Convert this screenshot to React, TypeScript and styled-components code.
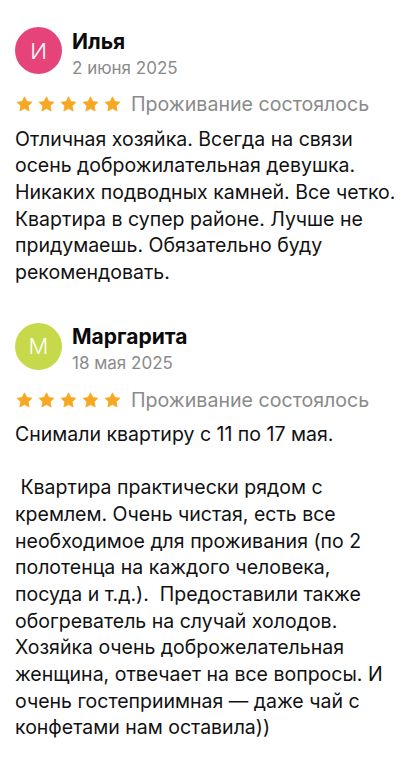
import React from "react";
import styled, { createGlobalStyle } from "styled-components";

const GlobalStyle = createGlobalStyle`
    body {
        margin: 0;
        background: #ffffff;
        font-family: Inter, "Noto Sans", sans-serif;
        color: #111111;
    }
`;

const Page = styled.div`
    display: flex;
    flex-direction: column;
    gap: 37px;
    padding: 27px 15px 0 15px;
`;

const Review = styled.div`
    display: flex;
    flex-direction: column;
`;

const Header = styled.div`
    display: flex;
    align-items: flex-start;
    gap: 10px;
`;

const Avatar = styled.div<{ $bg: string }>`
    width: 47px;
    height: 47px;
    border-radius: 50%;
    background: ${(p) => p.$bg};
    color: #ffffff;
    display: flex;
    align-items: center;
    justify-content: center;
    font-size: 22px;
    font-weight: 300;
    flex-shrink: 0;
`;

const Who = styled.div`
    display: flex;
    flex-direction: column;
    gap: 2px;
    margin-top: 1.5px;
`;

const Name = styled.div`
    font-size: 21px;
    font-weight: 700;
    line-height: 26px;
    color: #0a0a0a;
`;

const DateText = styled.div`
    font-size: 17px;
    color: #8a8a8a;
    line-height: 22px;
`;

const RatingRow = styled.div`
    display: flex;
    align-items: center;
    gap: 10px;
    height: 24px;
    margin-top: 13.5px;
`;

const Stars = styled.div`
    display: flex;
    gap: 5px;
    padding-left: 1px;
`;

const Status = styled.span`
    font-size: 19.6px;
    line-height: 24px;
    color: #8a8a8a;
`;

const Body = styled.p`
    margin: 9.5px 0 0 0;
    font-size: 19.5px;
    line-height: 26.67px;
    white-space: pre;
    color: #111111;
`;

const Star = () => (
    <svg width="17" height="16" viewBox="-1 -1 26 24">
        <path
            d="M12 0L15.53 7.15 23.41 8.29 17.71 13.85 19.05 21.71 12 18 4.95 21.71 6.29 13.85 0.59 8.29 8.47 7.15Z"
            fill="#F7A823"
            stroke="#F7A823"
            strokeWidth="1.2"
            strokeLinejoin="round"
        />
    </svg>
);

type Item = {
    letter: string;
    color: string;
    name: string;
    date: string;
    lines: string[];
};

const reviews: Item[] = [
    {
        letter: "И",
        color: "#E5437A",
        name: "Илья",
        date: "2 июня 2025",
        lines: [
            "Отличная хозяйка. Всегда на связи",
            "осень доброжилательная девушка.",
            "Никаких подводных камней. Все четко.",
            "Квартира в супер районе. Лучше не",
            "придумаешь. Обязательно буду",
            "рекомендовать."
        ]
    },
    {
        letter: "М",
        color: "#C6D94B",
        name: "Маргарита",
        date: "18 мая 2025",
        lines: [
            "Снимали квартиру с 11 по 17 мая.",
            "",
            " Квартира практически рядом с",
            "кремлем. Очень чистая, есть все",
            "необходимое для проживания (по 2",
            "полотенца на каждого человека,",
            "посуда и т.д.).  Предоставили также",
            "обогреватель на случай холодов.",
            "Хозяйка очень доброжелательная",
            "женщина, отвечает на все вопросы. И",
            "очень гостеприимная — даже чай с",
            "конфетами нам оставила))"
        ]
    }
];

const App: React.FC = () => {
    return (
        <>
            <GlobalStyle />
            <Page>
                {reviews.map((r, i) => (
                    <Review key={`review-${i}`}>
                        <Header>
                            <Avatar $bg={r.color}>{r.letter}</Avatar>
                            <Who>
                                <Name>{r.name}</Name>
                                <DateText>{r.date}</DateText>
                            </Who>
                        </Header>
                        <RatingRow>
                            <Stars>
                                {[0, 1, 2, 3, 4].map((s) => (
                                    <Star key={s} />
                                ))}
                            </Stars>
                            <Status>Проживание состоялось</Status>
                        </RatingRow>
                        <Body>{r.lines.join("\n")}</Body>
                    </Review>
                ))}
            </Page>
        </>
    );
};

export default App;
